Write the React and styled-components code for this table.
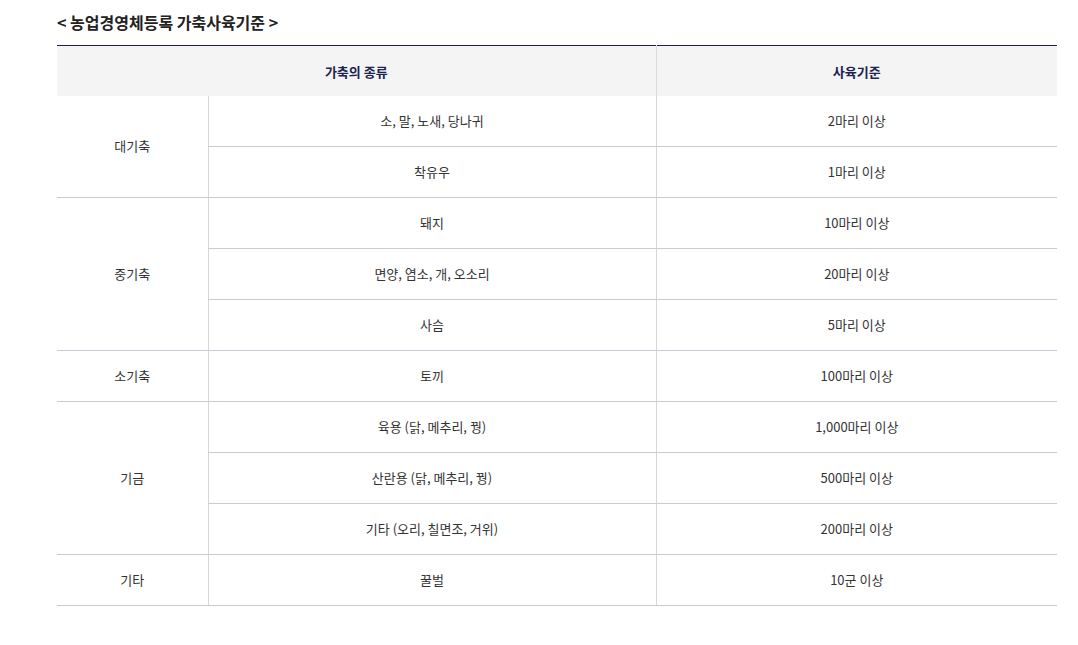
import React from "react";
import styled, { createGlobalStyle } from "styled-components";

const Global = createGlobalStyle`
  html, body { margin: 0; padding: 0; background: #fff; }
  body { font-family: "Noto Sans CJK KR", "Noto Sans", sans-serif; }
`;

const Page = styled.div`
  padding: 12px 21px 0 57px;
`;

const Title = styled.h3`
  margin: 0 0 13px;
  font-size: 16px;
  line-height: 20px;
  font-weight: 700;
  color: #222;
`;

const Table = styled.table`
  width: 1000px;
  border-collapse: collapse;
  table-layout: fixed;
  border-top: 1px solid #1b1d5c;
  font-size: 13px;
  color: #333;
`;

const Th = styled.th`
  height: 50px;
  padding: 0;
  background: #f4f4f4;
  color: #1c2350;
  font-weight: 700;
  font-size: 13px;
  text-align: center;
  border-left: ${(p) => (p.$first ? "0" : "1px solid #dcdcdc")};
`;

const Tr = styled.tr`
  border-bottom: 1px solid #c9cad6;
`;

const Td = styled.td`
  height: 48px;
  padding: 0 0 2px;
  text-align: center;
  vertical-align: middle;
  border-left: ${(p) => (p.$first ? "0" : "1px solid #d6d6de")};
  border-bottom: 1px solid #c9cad6;
`;

const groups = [
  { name: "대기축", rows: [["소, 말, 노새, 당나귀", "2마리 이상"], ["착유우", "1마리 이상"]] },
  { name: "중기축", rows: [["돼지", "10마리 이상"], ["면양, 염소, 개, 오소리", "20마리 이상"], ["사슴", "5마리 이상"]] },
  { name: "소기축", rows: [["토끼", "100마리 이상"]] },
  { name: "기금", rows: [["육용 (닭, 메추리, 꿩)", "1,000마리 이상"], ["산란용 (닭, 메추리, 꿩)", "500마리 이상"], ["기타 (오리, 칠면조, 거위)", "200마리 이상"]] },
  { name: "기타", rows: [["꿀벌", "10군 이상"]] },
];

export default function App() {
  return (
    <>
      <Global />
      <Page>
        <Title>&lt; 농업경영체등록 가축사육기준 &gt;</Title>
        <Table>
          <colgroup>
            <col style={{ width: 151 }} />
            <col style={{ width: 448 }} />
            <col />
          </colgroup>
          <thead>
            <tr>
              <Th $first colSpan={2}>가축의 종류</Th>
              <Th>사육기준</Th>
            </tr>
          </thead>
          <tbody>
            {groups.map((g) =>
              g.rows.map((r, i) => (
                <Tr key={g.name + i}>
                  {i === 0 && (
                    <Td $first rowSpan={g.rows.length}>
                      {g.name}
                    </Td>
                  )}
                  <Td>{r[0]}</Td>
                  <Td>{r[1]}</Td>
                </Tr>
              ))
            )}
          </tbody>
        </Table>
      </Page>
    </>
  );
}
